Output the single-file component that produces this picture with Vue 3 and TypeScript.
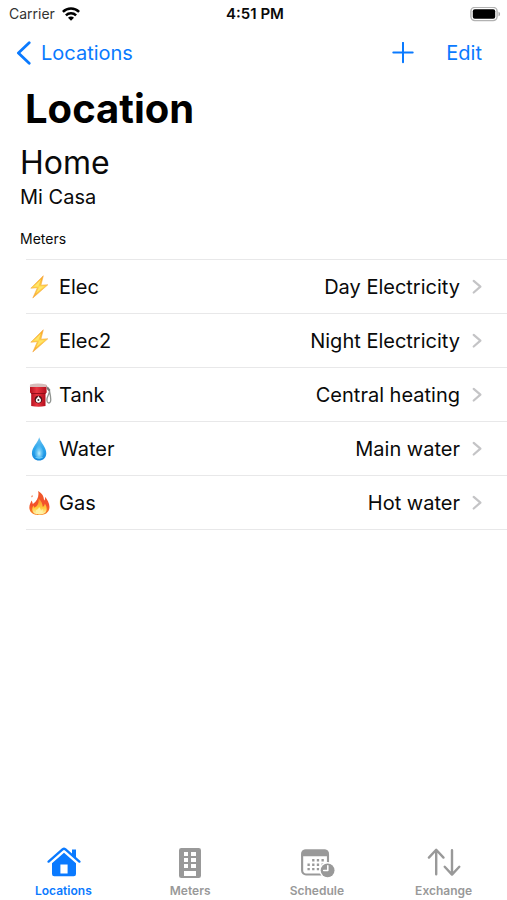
<script setup lang="ts">
import { ref } from 'vue'

type IconName = 'bolt' | 'pump' | 'drop' | 'flame'
type TabName = 'Locations' | 'Meters' | 'Schedule' | 'Exchange'

interface Meter {
  name: string
  detail: string
  icon: IconName
}

const meters: Meter[] = [
  { name: 'Elec', detail: 'Day Electricity', icon: 'bolt' },
  { name: 'Elec2', detail: 'Night Electricity', icon: 'bolt' },
  { name: 'Tank', detail: 'Central heating', icon: 'pump' },
  { name: 'Water', detail: 'Main water', icon: 'drop' },
  { name: 'Gas', detail: 'Hot water', icon: 'flame' },
]

const tabs: TabName[] = ['Locations', 'Meters', 'Schedule', 'Exchange']
const activeTab = ref<TabName>('Locations')
</script>

<template>
  <div class="screen">
    <svg class="defs" width="0" height="0" aria-hidden="true">
      <defs>
        <linearGradient id="boltFill" x1="0" y1="0" x2="0" y2="1">
          <stop offset="0" stop-color="#f9a01b" />
          <stop offset="0.5" stop-color="#ffd84a" />
          <stop offset="1" stop-color="#f9a826" />
        </linearGradient>
        <linearGradient id="pumpFill" x1="0" y1="0" x2="1" y2="0">
          <stop offset="0" stop-color="#b5121f" />
          <stop offset="0.4" stop-color="#ea3540" />
          <stop offset="1" stop-color="#b40f1d" />
        </linearGradient>
        <linearGradient id="dropFill" x1="0" y1="0" x2="0" y2="1">
          <stop offset="0" stop-color="#6fc3f0" />
          <stop offset="0.5" stop-color="#2ba5ec" />
          <stop offset="1" stop-color="#1487dc" />
        </linearGradient>
        <radialGradient id="dropShine" cx="0.5" cy="0.7" r="0.55">
          <stop offset="0" stop-color="#c8f3ff" />
          <stop offset="1" stop-color="#52c0f7" stop-opacity="0.2" />
        </radialGradient>
        <linearGradient id="flameFill" x1="0" y1="0" x2="0" y2="1">
          <stop offset="0" stop-color="#ee5a2b" />
          <stop offset="0.6" stop-color="#f4512a" />
          <stop offset="1" stop-color="#f98a1d" />
        </linearGradient>
        <linearGradient id="flameCore" x1="0" y1="0" x2="0" y2="1">
          <stop offset="0" stop-color="#fb8a25" />
          <stop offset="0.6" stop-color="#ffcb3c" />
          <stop offset="1" stop-color="#fff6b8" />
        </linearGradient>
      </defs>
    </svg>

    <div class="status">
      <div class="carrier">
        <span>Carrier</span>
        <svg width="18" height="14" viewBox="0 0 18 14" fill="none" stroke="#000" stroke-width="2.5" aria-hidden="true">
          <path d="M0.9 4.9a11.6 11.6 0 0 1 16.2 0" />
          <path d="M3.9 8.3a7.3 7.3 0 0 1 10.2 0" />
          <path d="M9 13.7 6 10.7a4.2 4.2 0 0 1 6 0z" fill="#000" stroke="none" />
        </svg>
      </div>
      <time class="clock">4:51 PM</time>
      <svg class="battery" width="31" height="15" viewBox="0 0 31 15" aria-hidden="true">
        <rect x="0.9" y="0.4" width="26.2" height="13.2" rx="4" fill="#fff" stroke="#b2b2b2" stroke-width="1.4" />
        <rect x="2.8" y="2.3" width="22.4" height="9.4" rx="2" fill="#000" />
        <path d="M28.5 4.7c2.1.7 2.1 3.9 0 4.6z" fill="#a8a8a8" />
      </svg>
    </div>

    <nav class="navbar" aria-label="Page">
      <a class="back" href="#locations">
        <svg width="15" height="25" viewBox="0 0 15 25" fill="none" stroke="currentColor" stroke-width="2.8" stroke-linecap="round" stroke-linejoin="round" aria-hidden="true">
          <path d="M13.2 1.7 2.4 12l10.8 10.3" />
        </svg>
        <span>Locations</span>
      </a>
      <div class="actions">
        <button type="button" class="action" aria-label="Add">
          <svg width="22" height="22" viewBox="0 0 22 22" fill="none" stroke="currentColor" stroke-width="2" stroke-linecap="round" aria-hidden="true">
            <path d="M11 0.8v19.4M1.3 10.5h19.4" />
          </svg>
        </button>
        <button type="button" class="action">Edit</button>
      </div>
    </nav>

    <main class="content">
      <h1 class="title">Location</h1>
      <h2 class="name">Home</h2>
      <p class="note">Mi Casa</p>
      <h3 class="section">Meters</h3>

      <ul class="list">
        <li v-for="meter in meters" :key="meter.name" class="item">
          <a class="row" :href="'#' + meter.name.toLowerCase()">
            <svg v-if="meter.icon === 'bolt'" class="emoji" viewBox="0 0 24 26" aria-hidden="true">
              <path d="M15.3 1.8 2.8 14.2l6.6-.5L4.8 24 19.8 10.8l-6.9.4z" fill="url(#boltFill)" stroke="#f5a843" stroke-width="0.6" stroke-linejoin="round" />
              <path d="M13 5.3 5.8 12.7l5.7-.5L8 19.6l8.1-7.4-5.8.4z" fill="#ffe56b" />
            </svg>
            <svg v-else-if="meter.icon === 'pump'" class="emoji" viewBox="0 0 24 26" aria-hidden="true">
              <path d="M18.3 4.5c2.3 1.5 3.7 2.4 3.2 5.2-.4 3-3.2 5.2-2.5 9.3.2 2 2.3 2.8 3.4.8 1-2.2-.1-7-.8-10.2" fill="none" stroke="#8f938f" stroke-width="1.3" />
              <path d="M19.2 5.8 21.7 8.7" stroke="#777" stroke-width="2.1" />
              <path d="M3.2 11h14.3v13q-7.1 1.4-14.3 0z" fill="url(#pumpFill)" />
              <path d="M2 3h16.3l.4 7.5-1.3 1.2H3.3L2 10.5z" fill="url(#pumpFill)" />
              <path d="M2 2.4q8-1.6 16.3 0l.2 2.6H1.9z" fill="#d7bcba" />
              <path d="M3.2 11.5h14.2" stroke="#8b0b16" stroke-width="0.9" />
              <circle cx="10.4" cy="17.6" r="3.8" fill="#53151a" />
              <path d="M10.4 14c1 2.1 2.6 2.6 2.6 4.1a2.6 2.6 0 0 1-5.2 0c0-1.5 1.8-2.1 2.6-4.1z" fill="#fff" />
              <circle cx="10.4" cy="18" r="1" fill="#333" />
            </svg>
            <svg v-else-if="meter.icon === 'drop'" class="emoji" viewBox="0 0 24 26" aria-hidden="true">
              <path d="M11.2 1.3c1.5 5.6 7.1 9.8 7.1 16 0 4.5-3.1 7.3-7.2 7.3s-7.2-2.8-7.2-7.3c0-6.2 5.9-10.4 7.3-16z" fill="url(#dropFill)" />
              <path d="M11.1 6.2c1 4 4.6 6.8 4.6 11.1 0 3-1.9 4.8-4.6 4.8s-4.6-1.8-4.6-4.8c0-4.3 3.8-7.1 4.6-11.1z" fill="url(#dropShine)" />
              <path d="M6.5 20.7q4.6 4 9.2 0-4.6 1.6-9.2 0z" fill="#70d6ff" />
            </svg>
            <svg v-else class="emoji" viewBox="0 0 24 26" aria-hidden="true">
              <path d="M10.1 1.1c4.3 2.3 5.6 5.4 6 9.3 1.1-.8 1.1-2.2.8-3.7 2.4 2.6 5 7.1 4.5 11.2-.4 4.4-3.9 7.1-9.7 7.1S2 22.8 1.4 18.4c-.4-3.3 1.3-5.2 2-7.9.8 1 1.1 2.1 1.4 3.4 4.7-2.9 6.5-8 5.3-12.8z" fill="url(#flameFill)" />
              <path d="M10.5 8.5c2.8 2.2 4 5.2 4.3 8.4 1.3-.7 1.8-2 2-3.4 1.7 2.3 2.3 5 1.6 7.2-.8 2.5-3.2 3.7-6.9 3.7-4.2 0-6.8-1.2-7.2-4.4-.2-1.9.4-3.1 1.1-4.6.5.8.7 1.5.9 2.4 3.7-2.2 4.8-5.5 4.2-9.3z" fill="url(#flameCore)" />
              <path d="M11 17c1.5 1.4 1.7 2.8 1.8 3.8.9-.3 1.3-.9 1.6-1.7.9 2.2.4 4.8-2.9 4.8-3 0-4.1-1.6-3.5-3.7 1.7-.6 2.8-1.7 3-3.2z" fill="#fff1a3" />
              <path d="M3.3 7.3q-.1-1.7 1.3-2.3-.3 1.1.1 1.9" fill="#f17847" />
            </svg>
            <span class="label">{{ meter.name }}</span>
            <span class="detail">{{ meter.detail }}</span>
            <svg class="chevron" width="10" height="16" viewBox="0 0 10 16" fill="none" stroke="#c4c4c6" stroke-width="2.2" stroke-linecap="round" stroke-linejoin="round" aria-hidden="true">
              <path d="m1.7 1.9 6.7 5.8-6.7 5.8" />
            </svg>
          </a>
        </li>
      </ul>
    </main>

    <nav class="tabs" aria-label="Sections">
      <button
        v-for="tab in tabs"
        :key="tab"
        type="button"
        class="tab"
        :class="{ active: tab === activeTab }"
        :aria-current="tab === activeTab ? 'page' : undefined"
        @click="activeTab = tab"
      >
        <svg v-if="tab === 'Locations'" class="tab-icon" viewBox="-1 0.6 36 32" aria-hidden="true">
          <path d="m2.6 16.2 14.2-12.4q1.2-.9 2.4 0l14.2 12.4" fill="none" stroke="currentColor" stroke-width="2.4" stroke-linecap="round" stroke-linejoin="round" />
          <path d="M26 4h4v9l-4-3.7z" fill="currentColor" />
          <path fill-rule="evenodd" d="M18 7.4 30 17.8v10.7q0 2.3-2.3 2.3H8.3Q6 30.8 6 28.5V17.8zM14.4 19v9.2h7.2V19z" fill="currentColor" />
        </svg>
        <svg v-else-if="tab === 'Meters'" class="tab-icon" viewBox="0 0 36 32" aria-hidden="true">
          <rect x="7" y="2" width="22" height="30" rx="2.3" fill="currentColor" />
          <path d="M12 6h4v4h-4zm7 0h5v4h-5zM12 12h4v4h-4zm7 0h5v4h-5zM12 18h4v4h-4zm7 0h5v4h-5zM12 25h12v5H12z" fill="#fff" />
        </svg>
        <svg v-else-if="tab === 'Schedule'" class="tab-icon" viewBox="-1 0 37 32" aria-hidden="true">
          <rect x="2.2" y="4.2" width="26.6" height="24.6" rx="4" fill="none" stroke="currentColor" stroke-width="2.2" />
          <path d="M1.4 10V7.4Q1.4 3.2 5.6 3.2h19.8q4.2 0 4.2 4.2V10z" fill="currentColor" />
          <path d="M12.5 13h2.4v2.4h-2.4zm4.8 0h2.4v2.4h-2.4zm4.8 0h2.4v2.4h-2.4zM7.7 17.6h2.4V20H7.7zm4.8 0h2.4V20h-2.4zm4.8 0h2.4V20h-2.4zm4.8 0h2.4V20h-2.4zM7.7 22.2h2.4v2.4H7.7zm4.8 0h2.4v2.4h-2.4zm4.8 0h2.4v2.4h-2.4z" fill="currentColor" />
          <circle cx="28.4" cy="24.6" r="8.6" fill="#fff" />
          <circle cx="28.4" cy="24.6" r="7.1" fill="currentColor" />
          <path d="M28.6 19.8v5h-4.2" fill="none" stroke="#fff" stroke-width="1.6" stroke-linecap="round" stroke-linejoin="round" />
        </svg>
        <svg v-else class="tab-icon" viewBox="0 0 36 32" fill="none" stroke="currentColor" stroke-width="2.4" stroke-linecap="round" stroke-linejoin="round" aria-hidden="true">
          <path d="M10.2 28.2V4.2M2.9 11.6l7.3-7.8 7.3 7.8" />
          <path d="M26 4.2v24M18.7 20.8l7.3 7.8 7.3-7.8" />
        </svg>
        <span>{{ tab }}</span>
      </button>
    </nav>
  </div>
</template>

<style>
body {
  background: #fff;
}
</style>

<style scoped>
.screen {
  display: flex;
  flex-direction: column;
  min-height: 100vh;
  background: #fff;
  color: #0a0a0a;
  font-family: Inter, "Liberation Sans", sans-serif;
  font-size: 20px;
  line-height: 24px;
}

.defs {
  position: absolute;
}

svg {
  flex: none;
  display: block;
}

a {
  color: inherit;
  text-decoration: none;
}

button {
  border: 0;
  padding: 0;
  background: none;
  color: inherit;
  font: inherit;
  cursor: pointer;
}

h1,
h2,
h3,
p,
ul {
  margin: 0;
  padding: 0;
  font-weight: 400;
}

.status {
  display: grid;
  grid-template-columns: 1fr auto 1fr;
  align-items: center;
  height: 28px;
  padding: 0 6px 0 9px;
  font-size: 14px;
}

.carrier {
  display: flex;
  align-items: center;
  gap: 7px;
  color: #333;
}

.clock {
  font-size: 15px;
  font-weight: 600;
}

.battery {
  justify-self: end;
}

.navbar {
  display: flex;
  align-items: center;
  justify-content: space-between;
  height: 50px;
  padding: 0 25px 0 16px;
  color: #0a7aff;
}

.back {
  display: flex;
  align-items: center;
  gap: 10px;
}

.actions {
  display: flex;
  align-items: center;
  gap: 32px;
}

.content {
  flex: 1;
}

.title {
  padding-left: 25px;
  font-size: 40px;
  line-height: 62px;
  font-weight: 700;
  color: #000;
}

.name {
  padding: 1px 20px 0;
  font-size: 32px;
  line-height: 44px;
}

.note {
  padding: 0 20px;
}

.section {
  padding: 18px 20px 8px;
  font-size: 14px;
}

.list {
  margin-left: 26px;
  border-top: 1px solid #e8e8e9;
  list-style: none;
}

.item {
  border-bottom: 1px solid #e8e8e9;
}

.row {
  display: flex;
  align-items: center;
  height: 53px;
  padding: 0 25px 0 2px;
}

.emoji {
  width: 24px;
  height: 26px;
}

.label {
  padding-left: 7px;
}

.detail {
  margin-left: auto;
}

.chevron {
  margin-left: 12px;
}

.tabs {
  display: grid;
  grid-template-columns: repeat(4, 1fr);
  padding-bottom: 1px;
  color: #999;
}

.tab {
  display: flex;
  flex-direction: column;
  align-items: center;
  gap: 5px;
  font-size: 12px;
  line-height: 16px;
  font-weight: 600;
}

.tab.active {
  color: #0a7aff;
}

.tab-icon {
  width: 36px;
  height: 32px;
}
</style>
